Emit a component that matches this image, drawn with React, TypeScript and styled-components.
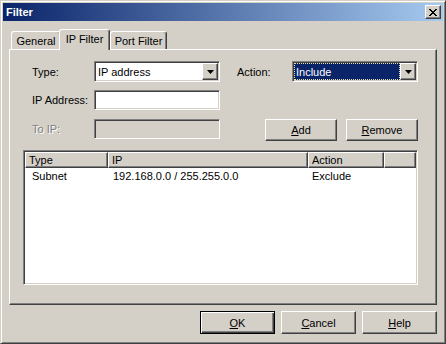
import React from "react";
import styled, { createGlobalStyle, css } from "styled-components";

const FACE = "#D4D0C8";

const Global = createGlobalStyle`
  html, body { margin: 0; padding: 0; background: ${FACE}; }
  body {
    font-family: "Liberation Sans", Arial, sans-serif;
    font-size: 11px;
    color: #000;
  }
  * { box-sizing: border-box; }
`;

const raised = css`
  border: 1px solid;
  border-color: #fff #404040 #404040 #fff;
  box-shadow: inset -1px -1px #808080;
`;

const sunken = css`
  border: 1px solid;
  border-color: #808080 #fff #fff #808080;
  box-shadow: inset 1px 1px #404040, inset -1px -1px ${FACE};
`;

const Window = styled.div`
  width: 446px;
  height: 344px;
  background: ${FACE};
  border: 1px solid;
  border-color: ${FACE} #404040 #404040 ${FACE};
  box-shadow: inset 1px 1px #fff, inset -1px -1px #808080;
  padding: 2px;
  display: flex;
  flex-direction: column;
`;

const TitleBar = styled.div`
  height: 18px;
  flex: none;
  background: linear-gradient(to right, #0a246a, #a6caf0);
  display: flex;
  align-items: center;
  justify-content: space-between;
  padding: 0 2px 0 3px;
`;

const Title = styled.span`
  color: #fff;
  font-weight: bold;
  font-size: 11px;
`;

const CloseButton = styled.div`
  width: 16px;
  height: 14px;
  background: ${FACE};
  ${raised};
  display: flex;
  align-items: center;
  justify-content: center;
`;

const Body = styled.div`
  flex: 1;
  display: flex;
  flex-direction: column;
  padding: 8px 6px 7px 6px;
`;

const TabStrip = styled.div`
  height: 20px;
  display: flex;
  align-items: flex-end;
  padding-left: 2px;
`;

const Tab = styled.div<{ $w: number; $active?: boolean }>`
  width: ${(p) => p.$w}px;
  height: 18px;
  background: ${FACE};
  border-top: 1px solid #fff;
  border-left: 1px solid #fff;
  border-right: 1px solid #404040;
  box-shadow: inset -1px 0 #808080;
  border-radius: 3px 3px 0 0;
  display: flex;
  align-items: center;
  justify-content: center;
  padding-top: 1px;
  ${(p) =>
    p.$active &&
    css`
      position: relative;
      z-index: 1;
      height: 21px;
      margin-bottom: -1px;
      margin-left: -2px;
      padding-top: 0;
      padding-bottom: 2px;
    `}
`;

const Panel = styled.div`
  height: 256px;
  flex: none;
  border: 1px solid;
  border-color: #fff #404040 #404040 #fff;
  box-shadow: inset -1px -1px #808080;
  padding: 11px 18px 0 13px;
  display: flex;
  flex-direction: column;
`;

const FormRow = styled.div<{ $mt?: number }>`
  display: flex;
  align-items: flex-start;
  margin-left: 9px;
  margin-top: ${(p) => p.$mt ?? 0}px;
`;

const Label = styled.div<{ $w: number; $h: number; $ml?: number; $disabled?: boolean }>`
  width: ${(p) => p.$w}px;
  height: ${(p) => p.$h}px;
  margin-left: ${(p) => p.$ml ?? 0}px;
  display: flex;
  align-items: center;
  color: ${(p) => (p.$disabled ? "#808080" : "#000")};
  text-shadow: ${(p) => (p.$disabled ? "1px 1px #fff" : "none")};
`;

const SelectBox = styled.div`
  width: 126px;
  height: 21px;
  background: #fff;
  ${sunken};
  padding: 1px;
  display: flex;
`;

const SelectValue = styled.div<{ $focused?: boolean }>`
  flex: 1;
  display: flex;
  align-items: center;
  padding-left: 2px;
  ${(p) =>
    p.$focused &&
    css`
      background: #0a246a;
      color: #fff;
      outline: 1px dotted #e8e0a0;
      outline-offset: -1px;
    `}
`;

const ArrowButton = styled.div`
  width: 16px;
  height: 100%;
  background: ${FACE};
  ${raised};
  display: flex;
  align-items: center;
  justify-content: center;
`;

const TextInput = styled.div<{ $disabled?: boolean }>`
  width: 126px;
  height: 20px;
  background: ${(p) => (p.$disabled ? FACE : "#fff")};
  ${sunken};
`;

const Button = styled.div<{ $w: number; $h: number; $ml?: number; $default?: boolean }>`
  width: ${(p) => p.$w}px;
  height: ${(p) => p.$h}px;
  margin-left: ${(p) => p.$ml ?? 0}px;
  background: ${FACE};
  display: flex;
  align-items: center;
  justify-content: center;
  ${(p) =>
    p.$default
      ? css`
          border: 1px solid #000;
          box-shadow: inset 1px 1px #fff, inset -1px -1px #404040, inset -2px -2px #808080;
        `
      : raised};
`;

const Mn = styled.span`
  text-decoration: underline;
`;

const ListView = styled.div`
  margin-top: 9px;
  width: 395px;
  height: 135px;
  background: #fff;
  ${sunken};
  padding: 1px;
  display: flex;
  flex-direction: column;
`;

const HeaderRow = styled.div`
  display: flex;
  height: 16px;
  flex: none;
`;

const HeaderCell = styled.div<{ $w?: number }>`
  ${(p) => (p.$w ? `width: ${p.$w}px;` : "flex: 1;")}
  height: 16px;
  background: ${FACE};
  ${raised};
  display: flex;
  align-items: center;
  padding-left: 3px;
  white-space: nowrap;
`;

const DataRow = styled.div`
  display: flex;
  height: 16px;
`;

const DataCell = styled.div<{ $w?: number; $pl: number }>`
  ${(p) => (p.$w ? `width: ${p.$w}px;` : "flex: 1;")}
  display: flex;
  align-items: center;
  padding-left: ${(p) => p.$pl}px;
  white-space: nowrap;
`;

const Footer = styled.div`
  margin-top: 6px;
  display: flex;
  justify-content: flex-end;
  gap: 6px;
`;

const DownArrow = () => (
  <svg width="7" height="4" viewBox="0 0 7 4">
    <path d="M0 0h7L3.5 4z" fill="#000" />
  </svg>
);

const CloseGlyph = () => (
  <svg width="8" height="7" viewBox="0 0 8 7" shapeRendering="crispEdges">
    <path
      d="M0 0h2v1H0zM6 0h2v1H6zM1 1h2v1H1zM5 1h2v1H5zM2 2h4v1H2zM3 3h2v1H3zM2 4h4v1H2zM1 5h2v1H1zM5 5h2v1H5zM0 6h2v1H0zM6 6h2v1H6z"
      fill="#000"
    />
  </svg>
);

const columns = [
  { name: "Type", w: 83 },
  { name: "IP", w: 200 },
  { name: "Action", w: 76 },
];

const rows = [{ type: "Subnet", ip: "192.168.0.0 / 255.255.0.0", action: "Exclude" }];

export default function App() {
  return (
    <>
      <Global />
      <Window>
        <TitleBar>
          <Title>Filter</Title>
          <CloseButton>
            <CloseGlyph />
          </CloseButton>
        </TitleBar>
        <Body>
          <TabStrip>
            <Tab $w={50}>General</Tab>
            <Tab $w={51} $active>
              IP Filter
            </Tab>
            <Tab $w={57}>Port Filter</Tab>
          </TabStrip>
          <Panel>
            <FormRow>
              <Label $w={62} $h={21}>Type:</Label>
              <SelectBox>
                <SelectValue>IP address</SelectValue>
                <ArrowButton>
                  <DownArrow />
                </ArrowButton>
              </SelectBox>
              <Label $w={55} $h={21} $ml={17}>Action:</Label>
              <SelectBox>
                <SelectValue $focused>Include</SelectValue>
                <ArrowButton>
                  <DownArrow />
                </ArrowButton>
              </SelectBox>
            </FormRow>
            <FormRow $mt={8}>
              <Label $w={62} $h={20}>IP Address:</Label>
              <TextInput />
            </FormRow>
            <FormRow $mt={9}>
              <Label $w={62} $h={20} $disabled>To IP:</Label>
              <TextInput $disabled />
              <Button $w={72} $h={22} $ml={45}>
                <Mn>A</Mn>dd
              </Button>
              <Button $w={72} $h={22} $ml={9}>
                <Mn>R</Mn>emove
              </Button>
            </FormRow>
            <ListView>
              <HeaderRow>
                {columns.map((c) => (
                  <HeaderCell key={c.name} $w={c.w}>
                    {c.name}
                  </HeaderCell>
                ))}
                <HeaderCell />
              </HeaderRow>
              {rows.map((r) => (
                <DataRow key={r.ip}>
                  <DataCell $w={83} $pl={7}>{r.type}</DataCell>
                  <DataCell $w={200} $pl={5}>{r.ip}</DataCell>
                  <DataCell $w={76} $pl={4}>{r.action}</DataCell>
                  <DataCell $pl={0} />
                </DataRow>
              ))}
            </ListView>
          </Panel>
          <Footer>
            <Button $w={75} $h={23} $default>
              <Mn>O</Mn>K
            </Button>
            <Button $w={75} $h={23}>
              <Mn>C</Mn>ancel
            </Button>
            <Button $w={75} $h={23}>
              <Mn>H</Mn>elp
            </Button>
          </Footer>
        </Body>
      </Window>
    </>
  );
}
